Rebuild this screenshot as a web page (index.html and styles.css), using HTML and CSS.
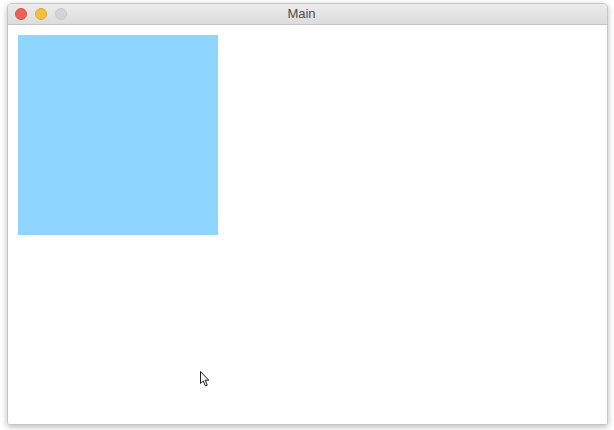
FILE: index.html
```html
<!DOCTYPE html>
<html>
<head>
<meta charset="utf-8">
<link rel="stylesheet" href="styles.css">
</head>
<body>
<div class="window">
  <div class="titlebar">
    <div class="lights">
      <span class="light red"></span>
      <span class="light yellow"></span>
      <span class="light gray"></span>
    </div>
    <div class="title">Main</div>
  </div>
  <div class="content">
    <div class="square"></div>
  </div>
</div>
<svg class="cursor" width="12" height="18" viewBox="0 0 12 18">
  <path d="M1.5 1.5 L1.5 13.5 L4.2 11 L6.5 16 L8.3 15.2 L6.1 10.2 L9.8 10.2 Z" fill="#f4f4f4" stroke="#222" stroke-width="1"/>
</svg>
</body>
</html>
```
FILE: styles.css
```css
html, body {
  margin: 0;
  padding: 0;
  background: #ffffff;
  width: 614px;
  height: 430px;
  overflow: hidden;
  font-family: "Liberation Sans", Arial, sans-serif;
}
.window {
  margin: 3px 0 0 7px;
  width: 601px;
  height: 422px;
  box-sizing: border-box;
  border: 1px solid #c6c6c6;
  border-radius: 5px 5px 3px 3px;
  box-shadow: 0 2px 6px rgba(0,0,0,0.28);
  background: #fff;
  overflow: hidden;
  display: flex;
  flex-direction: column;
}
.titlebar {
  height: 20px;
  flex: none;
  background: linear-gradient(#ececec, #dcdcdc);
  border-bottom: 1px solid #c4c4c4;
  position: relative;
  display: flex;
  align-items: center;
  justify-content: center;
}
.lights {
  position: absolute;
  left: 7px;
  top: 4px;
  display: flex;
  gap: 8px;
}
.light {
  width: 12px;
  height: 12px;
  border-radius: 50%;
  box-sizing: border-box;
}
.red { background: #ee5f57; border: 1px solid #dc4d45; }
.yellow { background: #f6be3f; border: 1px solid #dea833; }
.gray { background: #d4d4d4; border: 1px solid #c6c6c6; }
.title {
  font-size: 13px;
  color: #4c4c4c;
  margin-left: -12px;
  line-height: 20px;
}
.content {
  flex: 1;
  padding: 10px;
  background: #fff;
}
.square {
  width: 200px;
  height: 200px;
  background: #8ed5ff;
}
.cursor {
  position: absolute;
  left: 199px;
  top: 370px;
}
```
